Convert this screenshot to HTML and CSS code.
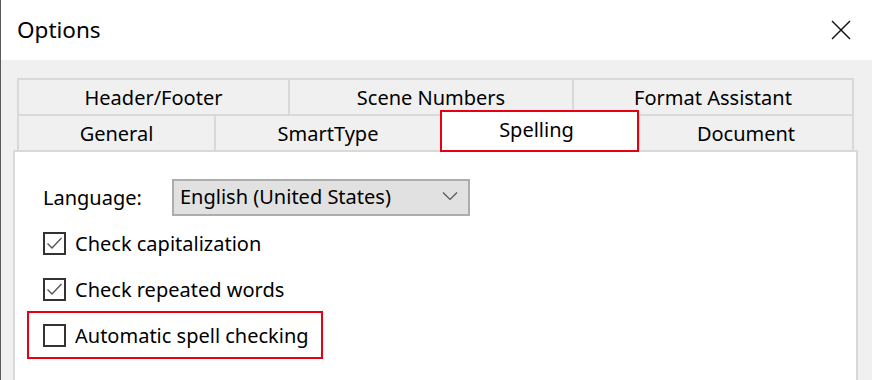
FILE: index.html
```html
<!DOCTYPE html>
<html lang="en">
<head>
    <meta charset="UTF-8">
    <title>Options</title>
    <link rel="stylesheet" href="styles.css">
</head>
<body>
    <div class="dialog">
        <div class="titlebar">
            <span class="title">Options</span>
            <button class="close-button">
                <svg width="20" height="20" viewBox="0 0 20 20" fill="none" stroke="#111" stroke-width="1.4">
                    <line x1="1" y1="1" x2="19" y2="19"></line>
                    <line x1="19" y1="1" x2="1" y2="19"></line>
                </svg>
            </button>
        </div>

        <div class="dialog-body">
            <div class="tabs">
                <div class="tab-row">
                    <div class="tab w-header">Header/Footer</div>
                    <div class="tab w-scene">Scene Numbers</div>
                    <div class="tab w-format last">Format Assistant</div>
                </div>
                <div class="tab-row">
                    <div class="tab w-general">General</div>
                    <div class="tab w-smart">SmartType</div>
                    <div class="tab w-spelling selected">Spelling</div>
                    <div class="tab w-document last">Document</div>
                </div>
            </div>

            <div class="panel">
                <div class="option-row">
                    <span class="label">Language:</span>
                    <div class="combo">
                        <span>English (United States)</span>
                        <svg width="16" height="10" viewBox="0 0 16 10" fill="none" stroke="#555" stroke-width="1.2">
                            <polyline points="1 1.5 8 8.5 15 1.5"></polyline>
                        </svg>
                    </div>
                </div>
                <label class="option-row">
                    <span class="checkbox">
                        <svg width="19" height="19" viewBox="0 0 19 19" fill="none" stroke="#555" stroke-width="1.4">
                            <polyline points="2.5 9.5 7 14 16.5 4"></polyline>
                        </svg>
                    </span>
                    Check capitalization
                </label>
                <label class="option-row">
                    <span class="checkbox">
                        <svg width="19" height="19" viewBox="0 0 19 19" fill="none" stroke="#555" stroke-width="1.4">
                            <polyline points="2.5 9.5 7 14 16.5 4"></polyline>
                        </svg>
                    </span>
                    Check repeated words
                </label>
                <label class="option-row highlight">
                    <span class="checkbox"></span>
                    Automatic spell checking
                </label>
            </div>
        </div>
    </div>
</body>
</html>
```

FILE: styles.css
```css
:root {
    --face-color: #f0f0f0;
    --tab-border: #d9d9d9;
    --mark-red: #e60012;
    --text-color: #000;
}

* {
    margin: 0;
    padding: 0;
    box-sizing: border-box;
}

body {
    font-family: "Noto Sans", "Open Sans", sans-serif;
    font-size: 20px;
    color: var(--text-color);
    background: var(--face-color);
    width: 872px;
    height: 380px;
    overflow: hidden;
}

.dialog {
    border-left: 1px solid #5a5a5a;
    height: 380px;
    display: flex;
    flex-direction: column;
}

.titlebar {
    background: #fff;
    height: 60px;
    flex-shrink: 0;
    display: flex;
    align-items: center;
    justify-content: space-between;
    padding: 0 21px 0 16px;
}

.title {
    font-size: 22.5px;
    padding-bottom: 2px;
}

.close-button {
    background: transparent;
    border: none;
    display: flex;
}

.dialog-body {
    flex: 1;
    min-height: 0;
    background: var(--face-color);
    padding: 18px 0 0 12px;
    display: flex;
    flex-direction: column;
}

/* tab strip, two stacked rows */
.tabs {
    margin-left: 4px;
}

.tab-row {
    display: flex;
    height: 36px;
}

.tab {
    border-top: 2px solid var(--tab-border);
    border-left: 2px solid var(--tab-border);
    background: var(--face-color);
    display: flex;
    justify-content: center;
    align-items: center;
    padding-top: 1px;
}

.tab.last {
    border-right: 2px solid var(--tab-border);
}

.w-header { width: 271px; }
.w-scene { width: 284px; }
.w-format { width: 282px; }
.w-general { width: 197px; }
.w-smart { width: 226px; }
.w-spelling { width: 198px; }
.w-document { width: 216px; }

.tab.selected {
    position: relative;
    z-index: 1;
    background: #fff;
    border: 2px solid var(--mark-red);
    width: 199px;
    height: 42px;
    margin: -4px -1px 0 0;
    padding: 0 6px 4px 0;
}

.panel {
    flex: 1;
    width: 845px;
    background: #fff;
    border: 2px solid var(--tab-border);
    border-bottom: none;
    padding: 22px 0 0 28px;
    display: flex;
    flex-direction: column;
}

.option-row {
    height: 46px;
    flex-shrink: 0;
    display: flex;
    align-items: center;
    gap: 9px;
}

.label {
    width: 120px;
}

.combo {
    width: 298px;
    height: 37px;
    background: #e1e1e1;
    border: 2px solid #adadad;
    display: flex;
    align-items: center;
    justify-content: space-between;
    padding: 0 10px 2px 6px;
}

.checkbox {
    width: 23px;
    height: 23px;
    border: 2px solid #333;
    background: #fff;
    display: flex;
    align-items: center;
    justify-content: center;
}

.option-row.highlight {
    height: 48px;
    width: 296px;
    margin: -1px 0 0 -16px;
    padding-left: 14px;
    border: 2px solid var(--mark-red);
}
```
